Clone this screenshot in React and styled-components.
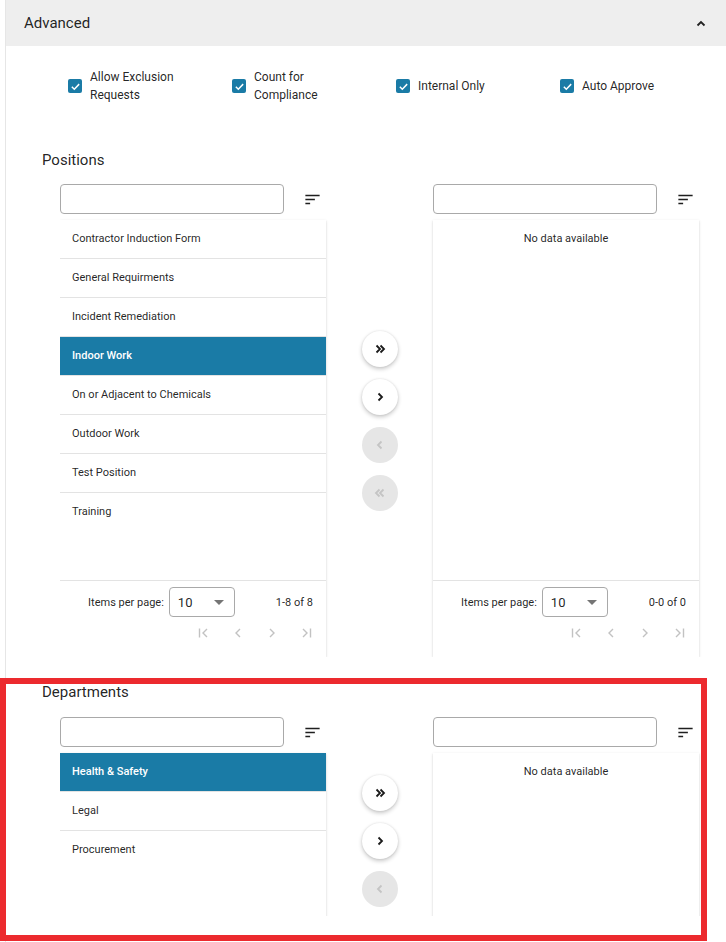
import React from 'react';
import styled, { createGlobalStyle } from 'styled-components';

const PRIMARY = '#1a7ba6';

const Global = createGlobalStyle`
  html, body { margin: 0; padding: 0; overflow: hidden; background: #fff; }
  body { font-family: Roboto, "Noto Sans", Arial, sans-serif; color: rgba(0,0,0,.87); }
  * { box-sizing: border-box; }
`;

const Panel = styled.div`
  margin-left: 5px;
  border-left: 1px solid #e6e6e6;
  min-height: 942px;
`;

const Header = styled.div`
  height: 46px;
  background: #eeeeee;
  display: flex;
  align-items: center;
  justify-content: space-between;
  padding: 0 20px 0 18px;
  font-size: 15px;
  color: rgba(0,0,0,.87);
`;

const Content = styled.div`
  padding-top: 22px;
`;

const CheckRow = styled.div`
  display: flex;
  padding-left: 54px;
`;

const CheckItem = styled.label`
  width: 164px;
  padding-left: 8px;
  display: flex;
  align-items: center;
  gap: 8px;
`;

const Box = styled.span`
  width: 14px;
  height: 14px;
  border-radius: 2px;
  background: ${PRIMARY};
  display: flex;
  align-items: center;
  justify-content: center;
  flex: none;
`;

const CheckLabel = styled.span`
  font-size: 12px;
  line-height: 18px;
  max-width: 100px;
  color: rgba(0,0,0,.87);
`;

const Section = styled.section`
  margin-top: ${p => p.$top}px;
  padding-left: 36px;
`;

const Title = styled.div`
  font-size: 15px;
  line-height: 20px;
  margin-bottom: ${p => p.$gap}px;
  color: rgba(0,0,0,.87);
`;

const Clip = styled.div`
  margin-left: 18px;
  height: ${p => (p.$height ? `${p.$height}px` : 'auto')};
  overflow: hidden;
`;

const Transfer = styled.div`
  display: grid;
  grid-template-columns: 266px 107px 266px;
`;

const Column = styled.div`
  display: flex;
  flex-direction: column;
  gap: 6px;
`;

const SearchRow = styled.div`
  display: flex;
  align-items: center;
  gap: 19px;
  height: 30px;
`;

const SearchInput = styled.input`
  width: 224px;
  height: 30px;
  border: 1px solid #a9a9a9;
  border-radius: 4px;
  outline: none;
  padding: 0 8px;
  font: inherit;
`;

const Card = styled.div`
  background: #fff;
  display: flex;
  flex-direction: column;
  box-shadow: 0 2px 1px -1px rgba(0,0,0,.2), 0 1px 1px 0 rgba(0,0,0,.14), 0 1px 3px 0 rgba(0,0,0,.12);
`;

const ListArea = styled.div`
  height: ${p => p.$height}px;
  overflow: hidden;
`;

const Item = styled.div`
  height: 39px;
  display: flex;
  align-items: center;
  padding: 0 0 2px 12px;
  font-size: 11px;
  border-bottom: 1px solid #e3e3e3;
  background: ${p => (p.$selected ? PRIMARY : '#fff')};
  color: ${p => (p.$selected ? '#fff' : 'rgba(0,0,0,.87)')};
  font-weight: ${p => (p.$selected ? 500 : 400)};
  &:last-child { border-bottom: none; }
`;

const Empty = styled.div`
  height: 36px;
  display: flex;
  align-items: center;
  justify-content: center;
  font-size: 11px;
  color: rgba(0,0,0,.87);
`;

const Footer = styled.div`
  border-top: 1px solid #e3e3e3;
  padding: 6px 13px 12px;
  display: flex;
  flex-direction: column;
  align-items: flex-end;
`;

const SizeRow = styled.div`
  display: flex;
  align-items: center;
  font-size: 11px;
  color: rgba(0,0,0,.87);
`;

const SizeLabel = styled.span`
  margin-right: 5px;
`;

const Select = styled.div`
  width: 66px;
  height: 30px;
  border: 1px solid #a9a9a9;
  border-radius: 4px;
  display: flex;
  align-items: center;
  justify-content: space-between;
  padding: 0 8px 0 8px;
  font-size: 13px;
  margin-right: 41px;
`;

const Caret = styled.span`
  width: 0;
  height: 0;
  border-left: 5px solid transparent;
  border-right: 5px solid transparent;
  border-top: 5px solid #757575;
  margin-right: 2px;
`;

const Pager = styled.div`
  display: flex;
  margin-top: 4px;
  margin-right: -10px;
`;

const PageBtn = styled.span`
  width: 34px;
  height: 24px;
  display: flex;
  align-items: center;
  justify-content: center;
  color: #c2c2c2;
`;

const Middle = styled.div`
  display: flex;
  flex-direction: column;
  align-items: center;
  justify-content: center;
  gap: 12px;
`;

const MoveBtn = styled.button`
  width: 36px;
  height: 36px;
  border-radius: 50%;
  border: none;
  padding: 0;
  display: flex;
  align-items: center;
  justify-content: center;
  background: ${p => (p.$disabled ? '#e6e6e6' : '#fff')};
  color: ${p => (p.$disabled ? '#c4c4c4' : '#1a1a1a')};
  box-shadow: ${p => (p.$disabled ? 'none' : '0 2px 4px rgba(0,0,0,.22), 0 0 2px rgba(0,0,0,.1)')};
`;

const Highlight = styled.div`
  position: absolute;
  left: 0;
  top: 678px;
  width: 707px;
  height: 263px;
  border: 6px solid #ec2a2e;
  pointer-events: none;
`;

const SortIcon = () => (
  <svg width="19" height="19" viewBox="0 0 24 24" fill="#1f1f1f">
    <path d="M3 18h6v-2H3v2zM3 6v2h18V6H3zm0 7h12v-2H3v2z" />
  </svg>
);

const Check = () => (
  <svg width="11" height="11" viewBox="0 0 12 12" fill="none" stroke="#fff" strokeWidth="1.6">
    <path d="M2 6.2l2.7 2.7L10 3.4" />
  </svg>
);

const Chev = ({ dir = 'right', double }) => {
  const flip = dir === 'left' ? 'scale(-1,1) translate(-14,0)' : undefined;
  return (
    <svg width="14" height="14" viewBox="0 0 14 14" fill="none" stroke="currentColor" strokeWidth="1.8">
      <g transform={flip}>
        {double ? (
          <>
            <path d="M3.5 3.5l3.5 3.5-3.5 3.5" />
            <path d="M7.5 3.5l3.5 3.5-3.5 3.5" />
          </>
        ) : (
          <path d="M5.5 3.5l3.5 3.5-3.5 3.5" />
        )}
      </g>
    </svg>
  );
};

const PageIcon = ({ kind }) => (
  <svg width="14" height="14" viewBox="0 0 14 14" fill="none" stroke="currentColor" strokeWidth="1.4">
    {kind === 'first' && (<><path d="M2.5 2.5v9" /><path d="M10 3l-4 4 4 4" /></>)}
    {kind === 'prev' && <path d="M9 3L5 7l4 4" />}
    {kind === 'next' && <path d="M5 3l4 4-4 4" />}
    {kind === 'last' && (<><path d="M11.5 2.5v9" /><path d="M4 3l4 4-4 4" /></>)}
  </svg>
);

const CardFooter = ({ range }) => (
  <Footer>
    <SizeRow>
      <SizeLabel>Items per page:</SizeLabel>
      <Select>
        <span>10</span>
        <Caret />
      </Select>
      <span>{range}</span>
    </SizeRow>
    <Pager>
      <PageBtn><PageIcon kind="first" /></PageBtn>
      <PageBtn><PageIcon kind="prev" /></PageBtn>
      <PageBtn><PageIcon kind="next" /></PageBtn>
      <PageBtn><PageIcon kind="last" /></PageBtn>
    </Pager>
  </Footer>
);

const TransferList = ({ items, selected, listHeight, range, footer = true }) => (
  <Transfer>
    <Column>
      <SearchRow>
        <SearchInput />
        <SortIcon />
      </SearchRow>
      <Card>
        <ListArea $height={listHeight}>
          {items.map(it => (
            <Item key={it} $selected={it === selected}>{it}</Item>
          ))}
        </ListArea>
        {footer && <CardFooter range={range} />}
      </Card>
    </Column>
    <Middle>
      <MoveBtn><Chev double /></MoveBtn>
      <MoveBtn><Chev /></MoveBtn>
      <MoveBtn $disabled><Chev dir="left" /></MoveBtn>
      <MoveBtn $disabled><Chev dir="left" double /></MoveBtn>
    </Middle>
    <Column>
      <SearchRow>
        <SearchInput />
        <SortIcon />
      </SearchRow>
      <Card>
        <ListArea $height={listHeight}>
          <Empty>No data available</Empty>
        </ListArea>
        {footer && <CardFooter range="0-0 of 0" />}
      </Card>
    </Column>
  </Transfer>
);

const positions = [
  'Contractor Induction Form',
  'General Requirments',
  'Incident Remediation',
  'Indoor Work',
  'On or Adjacent to Chemicals',
  'Outdoor Work',
  'Test Position',
  'Training',
];

const departments = ['Health & Safety', 'Legal', 'Procurement'];

const checks = ['Allow Exclusion Requests', 'Count for Compliance', 'Internal Only', 'Auto Approve'];

export default function App() {
  return (
    <>
      <Global />
      <Panel>
        <Header>
          <span>Advanced</span>
          <svg width="10" height="7" viewBox="0 0 10 7" fill="none" stroke="#222" strokeWidth="1.8">
            <path d="M1.5 5.5L5 2l3.5 3.5" />
          </svg>
        </Header>
        <Content>
          <CheckRow>
            {checks.map(c => (
              <CheckItem key={c}>
                <Box><Check /></Box>
                <CheckLabel>{c}</CheckLabel>
              </CheckItem>
            ))}
          </CheckRow>
          <Section $top={46}>
            <Title $gap={14}>Positions</Title>
            <Clip>
              <TransferList items={positions} selected="Indoor Work" listHeight={360} range="1-8 of 8" />
            </Clip>
          </Section>
          <Section $top={25}>
            <Title $gap={15}>Departments</Title>
            <Clip $height={199}>
              <TransferList items={departments} selected="Health & Safety" listHeight={260} footer={false} />
            </Clip>
          </Section>
        </Content>
      </Panel>
      <Highlight />
    </>
  );
}
